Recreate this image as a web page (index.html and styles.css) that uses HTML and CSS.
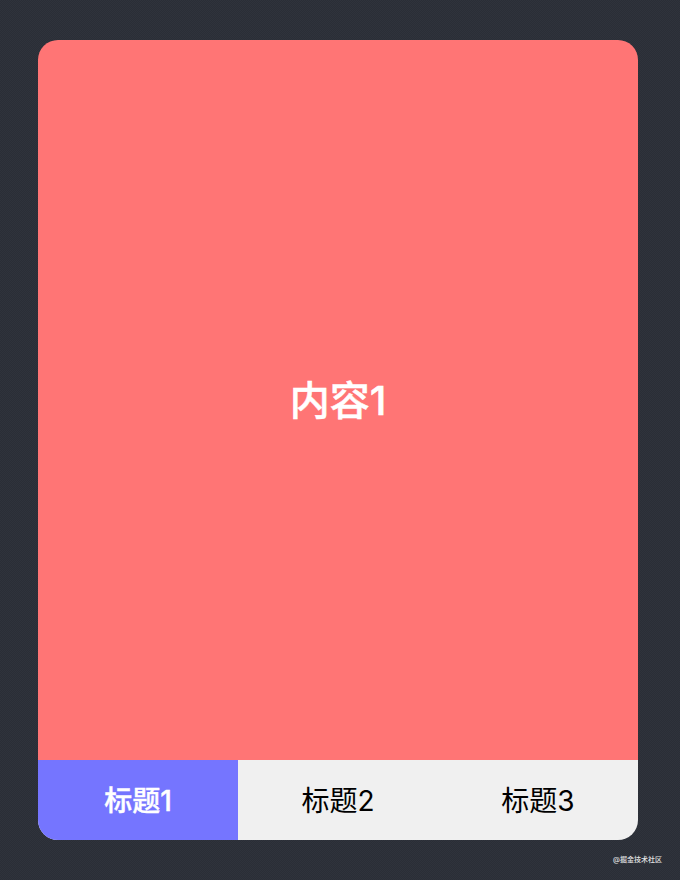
FILE: index.html
```html
<!DOCTYPE html>
<html lang="zh-CN">
<head>
    <meta charset="UTF-8">
    <meta name="viewport" content="width=device-width, initial-scale=1.0">
    <title>Tabs</title>
    <link rel="stylesheet" href="styles.css">
</head>
<body>
    <div class="tabs">
        <div class="tab-content">内容1</div>
        <div class="tab-bar">
            <div class="tab-item active">标题1</div>
            <div class="tab-item">标题2</div>
            <div class="tab-item">标题3</div>
        </div>
    </div>
    <div class="watermark">@掘金技术社区</div>
</body>
</html>
```

FILE: styles.css
```css
* {
    margin: 0;
    padding: 0;
    box-sizing: border-box;
    font-family: Inter, "Noto Sans CJK SC", sans-serif;
}

body {
    height: 880px;
    padding-top: 40px;
    display: flex;
    flex-direction: column;
    align-items: center;
    background-color: #2f333c;
    background-image: repeating-conic-gradient(rgba(0, 0, 0, 0.1) 0 25%, transparent 0 50%);
    background-size: 2px 2px;
    overflow: hidden;
    position: relative;
}

.tabs {
    width: 600px;
    height: 800px;
    margin-left: -4px;
    border-radius: 20px;
    overflow: hidden;
    display: flex;
    flex-direction: column;
}

.tab-content {
    flex: 1;
    display: flex;
    align-items: center;
    justify-content: center;
    padding-bottom: 4px;
    background: #ff7575;
    color: #fff;
    font-size: 40px;
    font-weight: 500;
    -webkit-text-stroke: 0.5px #fff;
}

.tab-bar {
    height: 80px;
    display: flex;
    background: #f0f0f0;
}

.tab-item {
    width: 200px;
    display: flex;
    align-items: center;
    justify-content: center;
    padding-bottom: 2px;
    color: #000;
    font-size: 28px;
}

.tab-item.active {
    background: #7575ff;
    color: #fff;
    font-weight: 500;
    -webkit-text-stroke: 0.4px #fff;
}

.watermark {
    position: absolute;
    right: 18px;
    bottom: 16px;
    color: #e4e4e4;
    font-size: 7px;
    font-weight: 500;
}
```
